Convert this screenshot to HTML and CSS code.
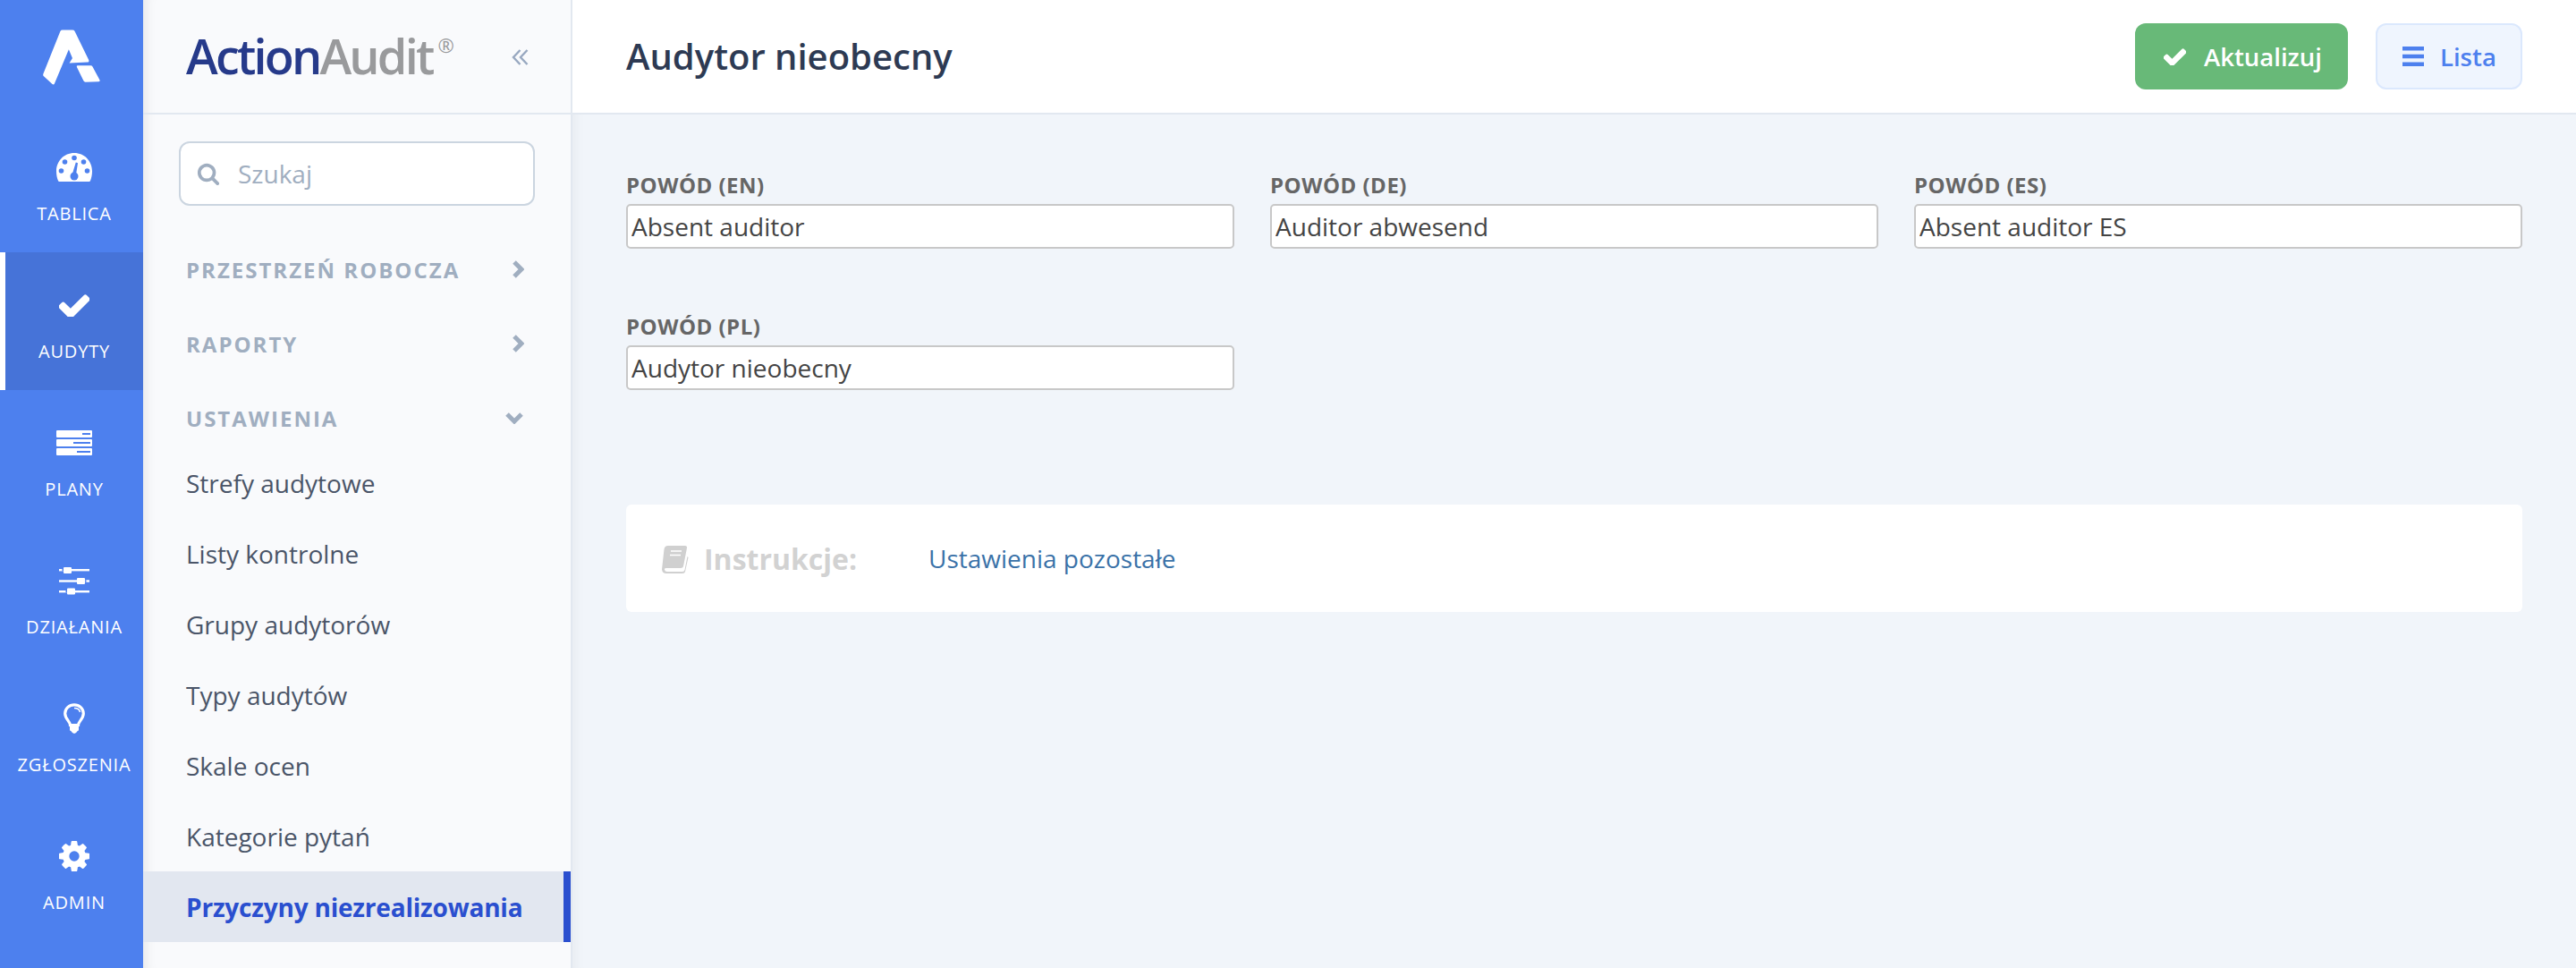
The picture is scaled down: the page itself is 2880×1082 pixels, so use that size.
FILE: index.html
```html
<!DOCTYPE html>
<html lang="pl">
<head>
<meta charset="utf-8">
<title>Audytor nieobecny</title>
<link rel="stylesheet" href="styles.css">
</head>
<body>
<div class="app">
  <nav class="rail">
    <div class="rail-logo">
      <svg class="logo-mark" viewBox="0 0 66 63" aria-hidden="true">
        <path d="M20 1.500Q20.700 0 22.500 0H34Q36 0 36.700 1.500L52.800 34.500Q53.700 37 51 37.300L30.500 38.200 34 32.500 29.800 22.500 13.300 62Q12.500 63.500 10.800 62.500L1 53.500Q-.3 52.300.3 50.800Z"/>
        <path d="M39 42.500Q38.500 41 40.300 41H55Q56.500 41 57.200 42.300L65.500 57.800Q66.300 59.500 64.300 59.500L49 60Q47.500 60 46.800 58.500Z"/>
      </svg>
    </div>
    <a class="rail-item"><span class="rail-icon">
      <svg class="ic-dash" viewBox="0 0 40 32" aria-hidden="true">
        <path class="fill-w" d="M20 0C8.500 0 0 9 0 20.500c0 4 .8 7.500 2 10.500q.3 1 1.300 1h33.400q1 0 1.300-1c1.200-3 2-6.500 2-10.500C40 9 31.500 0 20 0Z"/>
        <g class="fill-b"><circle cx="20" cy="5.500" r="2.800"/><circle cx="9.500" cy="10" r="2.800"/><circle cx="30.500" cy="10" r="2.800"/><circle cx="5.500" cy="20" r="2.800"/><circle cx="34.500" cy="20" r="2.800"/><circle cx="20" cy="26" r="4.500"/><path d="M21.800 10.500 24 11.200 22 24 18 23Z"/></g>
      </svg></span><span class="rail-label">TABLICA</span></a>
    <a class="rail-item active"><span class="rail-icon">
      <svg class="ic-check" viewBox="150 300 1492 1100" aria-hidden="true"><path class="fill-w" d="M1671 566q0 40-28 68l-724 724-136 136q-28 28-68 28t-68-28l-136-136-362-362q-28-28-28-68t28-68l136-136q28-28 68-28t68 28l294 295 656-657q28-28 68-28t68 28l136 136q28 28 28 68z"/></svg></span><span class="rail-label">AUDYTY</span></a>
    <a class="rail-item"><span class="rail-icon">
      <svg class="ic-plans" viewBox="0 0 40 28" aria-hidden="true">
        <g class="fill-w"><rect width="40" height="8" rx="1"/><rect y="10" width="40" height="8" rx="1"/><rect y="20" width="40" height="8" rx="1"/></g>
        <g class="fill-b"><rect x="29" y="3" width="9" height="2"/><rect x="19" y="13" width="19" height="2"/><rect x="23" y="23" width="15" height="2"/></g>
      </svg></span><span class="rail-label">PLANY</span></a>
    <a class="rail-item"><span class="rail-icon">
      <svg class="ic-sliders" viewBox="0 0 34 31" aria-hidden="true">
        <g class="fill-w"><rect y="2" width="34" height="2.400"/><rect y="14.300" width="34" height="2.400"/><rect y="26" width="34" height="2.400"/><rect x="5" width="9" height="7" rx="1"/><rect x="20" y="12" width="9" height="7" rx="1"/><rect x="9" y="23.500" width="9" height="7" rx="1"/></g>
        <g class="fill-b"><rect x="3.500" y="2" width="1.500" height="2.400"/><rect x="29" y="14.300" width="1.500" height="2.400"/><rect x="7.500" y="26" width="1.500" height="2.400"/></g>
      </svg></span><span class="rail-label">DZIAŁANIA</span></a>
    <a class="rail-item"><span class="rail-icon">
      <svg class="ic-bulb" viewBox="0 0 24 34" aria-hidden="true">
        <path class="stroke-w" d="M7.500 24.500c0-4-5.800-7-5.800-13C1.700 6 6.300 1.800 12 1.800S22.300 6 22.300 11.500c0 6-5.800 9-5.800 13Z"/>
        <path class="stroke-thin" d="M12 5.500c3.500 0 6 2 6.500 4.500"/>
        <path class="fill-w" d="M7 25h10v4.500q0 1.500-1.500 1.800Q14 34 12 34T8.500 31.300Q7 31 7 29.500Z"/>
      </svg></span><span class="rail-label">ZGŁOSZENIA</span></a>
    <a class="rail-item"><span class="rail-icon">
      <svg class="ic-gear" viewBox="128 128 1536 1536" aria-hidden="true"><path class="fill-w" d="M1152 896q0-106-75-181t-181-75-181 75-75 181 75 181 181 75 181-75 75-181zm512-109v222q0 12-8 23t-20 13l-185 28q-19 54-39 91 35 50 107 138 10 12 10 25t-9 23q-27 37-99 108t-94 71q-12 0-26-9l-138-108q-44 23-91 38-16 136-29 186-7 28-36 28h-222q-14 0-24.500-8.500t-11.500-21.500l-28-184q-49-16-90-37l-141 107q-10 9-25 9-14 0-25-11-126-114-165-168-7-10-7-23 0-12 8-23 15-21 51-66.500t54-70.500q-27-50-41-99l-183-27q-13-2-21-12.500t-8-23.500v-222q0-12 8-23t19-13l186-28q14-46 39-92-40-57-107-138-10-12-10-24 0-10 9-23 26-36 98.500-107.500t94.500-71.500q13 0 26 10l138 107q44-23 91-38 16-136 29-186 7-28 36-28h222q14 0 24.500 8.500t11.500 21.500l28 184q49 16 90 37l142-107q9-9 24-9 13 0 25 10 129 119 165 170 7 8 7 22 0 12-8 23-15 21-51 66.500t-54 70.500q26 50 41 98l183 28q13 2 21 12.500t8 23.500z"/></svg></span><span class="rail-label">ADMIN</span></a>
  </nav>

  <aside class="sidebar">
    <div class="brand">
      <div class="brand-name"><span class="brand-a">Action</span><span class="brand-b">Audit</span><span class="brand-r">®</span></div>
      <svg class="collapse" viewBox="0 0 20 20" aria-hidden="true"><path d="M9.500 2 2 10l7.500 8M17.500 2 10 10l7.500 8"/></svg>
    </div>
    <div class="search">
      <svg class="search-ic" viewBox="0 0 1792 1792" aria-hidden="true"><path d="M1216 832q0-185-131.500-316.500t-316.500-131.500-316.500 131.500-131.500 316.500 131.500 316.500 316.500 131.500 316.500-131.500 131.500-316.500zm512 832q0 52-38 90t-90 38q-54 0-90-38l-343-342q-179 124-399 124-143 0-273.500-55.500t-225-150-150-225-55.500-273.500 55.500-273.500 150-225 225-150 273.500-55.500 273.500 55.500 225 150 150 225 55.500 273.500q0 220-124 399l343 343q37 37 37 90z"/></svg>
      <input class="search-input" type="text" placeholder="Szukaj">
    </div>
    <div class="sections">
      <div class="section-head"><span>PRZESTRZEŃ ROBOCZA</span><svg class="chev" viewBox="0 0 14 22" aria-hidden="true"><path d="M3 3l8 8-8 8"/></svg></div>
      <div class="section-head"><span>RAPORTY</span><svg class="chev" viewBox="0 0 14 22" aria-hidden="true"><path d="M3 3l8 8-8 8"/></svg></div>
      <div class="section-head"><span>USTAWIENIA</span><svg class="chev-down" viewBox="0 0 22 14" aria-hidden="true"><path d="M3 3l8 8 8-8"/></svg></div>
    </div>
    <ul class="menu">
      <li class="menu-item">Strefy audytowe</li>
      <li class="menu-item">Listy kontrolne</li>
      <li class="menu-item">Grupy audytorów</li>
      <li class="menu-item">Typy audytów</li>
      <li class="menu-item">Skale ocen</li>
      <li class="menu-item">Kategorie pytań</li>
      <li class="menu-item current">Przyczyny niezrealizowania</li>
    </ul>
  </aside>

  <main class="main">
    <header class="topbar">
      <h1 class="title">Audytor nieobecny</h1>
      <div class="actions">
        <button class="btn btn-green"><svg class="btn-check" viewBox="150 300 1492 1100" aria-hidden="true"><path d="M1671 566q0 40-28 68l-724 724-136 136q-28 28-68 28t-68-28l-136-136-362-362q-28-28-28-68t28-68l136-136q28-28 68-28t68 28l294 295 656-657q28-28 68-28t68 28l136 136q28 28 28 68z"/></svg>Aktualizuj</button>
        <button class="btn btn-light"><svg class="btn-bars" viewBox="0 0 24 22" aria-hidden="true"><rect width="24" height="4.500"/><rect y="8.750" width="24" height="4.500"/><rect y="17.500" width="24" height="4.500"/></svg>Lista</button>
      </div>
    </header>
    <section class="content">
      <form class="fields">
        <label class="field"><span class="field-label">POWÓD (EN)</span><input class="field-input" type="text" value="Absent auditor"></label>
        <label class="field"><span class="field-label">POWÓD (DE)</span><input class="field-input" type="text" value="Auditor abwesend"></label>
        <label class="field"><span class="field-label">POWÓD (ES)</span><input class="field-input" type="text" value="Absent auditor ES"></label>
        <label class="field"><span class="field-label">POWÓD (PL)</span><input class="field-input" type="text" value="Audytor nieobecny"></label>
      </form>
      <div class="instructions">
        <svg class="book" viewBox="0 0 30 30" aria-hidden="true"><path class="book-fill" d="M7 1h19q2.500 0 2 2.500L24 24q-.5 2-3 2H5q-2.500 0-2 2t3 2h17q2 0 2.500-2l3-15 1 1-3.500 16q-.5 2-3 2H5Q.5 32 0 27.500L2.500 5Q3 1 7 1Z"/><path class="book-line" d="M10 7h12M9 11.500h12"/></svg>
        <span class="instr-label">Instrukcje:</span>
        <a class="instr-link">Ustawienia pozostałe</a>
      </div>
    </section>
  </main>
</div>
</body>
</html>
```

FILE: styles.css
```css
* { box-sizing: border-box; }
html, body { margin: 0; height: 100%; }
body { font-family: "Open Sans", "Noto Sans", sans-serif; overflow: hidden; background: #f1f5fa; }
.app { display: flex; height: 1082px; }

.rail { width: 160px; flex: none; background: #4d80ee; color: #fff; }
.rail-logo { height: 128px; display: flex; align-items: center; justify-content: center; }
.logo-mark { width: 64px; height: 64px; fill: #fff; overflow: visible; }
.rail-item { display: flex; flex-direction: column; align-items: center; height: 154px; padding-top: 39px; border-left: 6px solid transparent; }
.rail-item.active { background: #4673d8; border-left-color: #fff; }
.rail-icon { height: 40px; display: flex; align-items: center; justify-content: center; }
.rail-label { margin-top: 17px; font-size: 20px; line-height: 30px; letter-spacing: .8px; white-space: nowrap; }
.fill-w { fill: #fff; }
.fill-b { fill: #4d80ee; }
.stroke-w { fill: none; stroke: #fff; stroke-width: 3.2; }
.stroke-thin { fill: none; stroke: #fff; stroke-width: 1.5; }
.ic-dash { width: 40px; height: 32px; }
.ic-check { width: 34px; height: 26px; }
.ic-plans { width: 40px; height: 28px; }
.ic-sliders { width: 34px; height: 31px; }
.ic-bulb { width: 24px; height: 34px; }
.ic-gear { width: 34px; height: 34px; }

.sidebar { width: 480px; flex: none; background: #f9fafc; box-shadow: inset 14px 0 14px -12px rgba(0,0,0,.09); border-right: 2px solid #e2e8f0; }
.brand { height: 128px; border-bottom: 2px solid #e2e8f0; display: flex; align-items: center; justify-content: space-between; padding: 0 46px 0 48px; }
.brand-name { font-family: "Open Sans", sans-serif; font-size: 54px; font-weight: 600; letter-spacing: -2.8px; line-height: 60px; margin-top: -2px; white-space: nowrap; }
.brand-a { color: #263a8a; }
.brand-b { color: #999a9c; }
.brand-r { color: #999a9c; font-size: 22px; font-weight: 400; letter-spacing: 0; vertical-align: 24px; line-height: 0; margin-left: 6px; }
.collapse { width: 20px; height: 20px; fill: none; stroke: #98a8c0; stroke-width: 2.4; margin-top: 2px; }

.search { margin: 30px 40px 0; height: 72px; background: #fff; border: 2px solid #cbd5e0; border-radius: 12px; display: flex; align-items: center; padding-left: 18px; }
.search-ic { width: 26px; height: 26px; fill: #a0aec0; flex: none; }
.search-input { border: 0; outline: 0; background: transparent; font: 400 28px "Open Sans", sans-serif; color: #4a5568; margin-left: 20px; width: 280px; padding: 0; }
.search-input::placeholder { color: #a0aec0; opacity: 1; }

.sections { margin-top: 39px; display: flex; flex-direction: column; gap: 19px; }
.section-head { height: 64px; padding: 0 52px 0 48px; display: flex; align-items: center; justify-content: space-between; font-size: 24px; font-weight: 700; letter-spacing: 2px; color: #a0aec0; }
.chev { width: 14px; height: 22px; fill: none; stroke: #a0aec0; stroke-width: 5; }
.chev-down { width: 22px; height: 14px; fill: none; stroke: #a0aec0; stroke-width: 5; }

.menu { list-style: none; margin: 1px 0 0; padding: 0; }
.menu-item { height: 79px; display: flex; align-items: center; padding-left: 48px; font-size: 28px; color: #4a5568; }
.menu-item.current { background: #e2e7f0; color: #2a4fcf; font-weight: 700; letter-spacing: -.2px; border-right: 8px solid #2a4fcf; }

.main { flex: 1; display: flex; flex-direction: column; min-width: 0; }
.topbar { height: 128px; background: #fff; border-bottom: 2px solid #e2e8f0; display: flex; align-items: center; justify-content: space-between; padding: 0 60px; flex: none; }
.title { margin: 0; font-size: 40px; font-weight: 600; color: #2d3a53; line-height: 54px; }
.actions { display: flex; gap: 31px; }
.btn { height: 74px; border-radius: 12px; display: flex; align-items: center; font: 600 27.5px "Open Sans", sans-serif; padding: 0; }
.btn-green { width: 238px; background: #68b978; color: #fff; border: 0; padding-left: 32px; }
.btn-light { width: 164px; background: #eff5fe; color: #4d80ee; border: 2px solid #dbe8fd; padding-left: 28px; }
.btn-check { width: 25px; height: 20px; fill: #fff; margin-right: 20px; flex: none; }
.btn-bars { width: 24px; height: 22px; fill: #4d80ee; margin-right: 18px; flex: none; }

.content { flex: 1; padding: 58px 60px 0; box-shadow: inset 14px 0 14px -12px rgba(0,0,0,.05); }
.fields { display: grid; grid-template-columns: repeat(3, 680px); column-gap: 40px; row-gap: 66px; }
.field { display: flex; flex-direction: column; }
.field-label { font-size: 24px; font-weight: 700; letter-spacing: .5px; color: #666; line-height: 42px; }
.field-input { height: 50px; border: 2px solid #c8c8c8; border-radius: 5px; background: #fff; padding: 0 4px; font: 400 28px "Open Sans", sans-serif; color: #444; outline: 0; }

.instructions { margin-top: 128px; height: 120px; background: #fff; border-radius: 6px; display: flex; align-items: center; padding-left: 40px; }
.book { width: 30px; height: 30px; overflow: visible; flex: none; }
.book-fill { fill: #d0d0d0; }
.book-line { fill: none; stroke: #fff; stroke-width: 1.600; }
.instr-label { font-size: 32px; font-weight: 700; color: #d2d2d2; margin-left: 17px; width: 251px; }
.instr-link { font-size: 28px; color: #3a72a8; }
```
